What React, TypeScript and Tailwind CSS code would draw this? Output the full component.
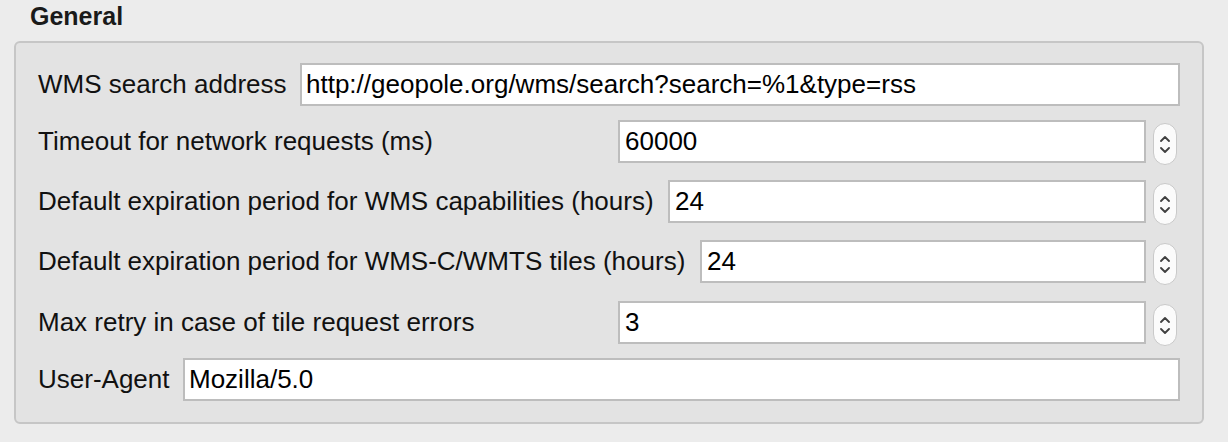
import React from "react";

const font = { fontFamily: '"Liberation Sans", Arial, Helvetica, sans-serif' };

function Spinner() {
  return (
    <div className="ml-[7px] mr-[3px] mt-[3px] flex h-[42px] w-[24px] shrink-0 flex-col items-center justify-center gap-[5px] rounded-full border-[1.5px] border-[#c9c9c9] bg-[#fbfbfb]">
      <svg width="10" height="6" viewBox="0 0 10 6">
        <path d="M1 5 L5 1 L9 5" fill="none" stroke="#3f3f3f" strokeWidth="1.8" strokeLinecap="round" strokeLinejoin="round" />
      </svg>
      <svg width="10" height="6" viewBox="0 0 10 6">
        <path d="M1 1 L5 5 L9 1" fill="none" stroke="#3f3f3f" strokeWidth="1.8" strokeLinecap="round" strokeLinejoin="round" />
      </svg>
    </div>
  );
}

function Field({ value, inset }: { value: string; inset: string }) {
  return (
    <div
      className={`flex h-[43px] min-w-0 flex-1 items-center border-2 border-[#bdbdbd] bg-white text-[26px] text-black whitespace-nowrap ${inset}`}
    >
      {value}
    </div>
  );
}

function Row({
  label,
  labelW,
  value,
  spin,
  mt,
}: {
  label: string;
  labelW: string;
  value: string;
  spin?: boolean;
  mt: string;
}) {
  return (
    <div className={`flex h-[43px] items-start ${mt}`}>
      <div className={`flex h-[43px] shrink-0 items-center whitespace-nowrap text-[26px] text-[#111] ${labelW}`}>
        {label}
      </div>
      <Field value={value} inset={spin ? "pl-[5px]" : "pl-[4px]"} />
      {spin ? <Spinner /> : null}
    </div>
  );
}

export default function App() {
  return (
    <div className="h-[442px] w-[1228px] overflow-hidden bg-[#ececec] pl-[14px]" style={font}>
      <div className="h-[41px] pl-[16px] pt-[1px] text-[25px] font-bold leading-[30px] text-[#1a1a1a]">
        General
      </div>
      <div className="h-[383px] w-[1190px] rounded-[6px] border-2 border-[#c6c6c6] bg-[#e3e3e3] pl-[22px] pr-[22px] pt-[20px]">
        <div className="flex flex-col">
          <Row mt="mt-0" label="WMS search address" labelW="w-[262px]" value="http://geopole.org/wms/search?search=%1&type=rss" />
          <Row mt="mt-[14px]" label="Timeout for network requests (ms)" labelW="w-[580px]" value="60000" spin />
          <Row mt="mt-[17px]" label="Default expiration period for WMS capabilities (hours)" labelW="w-[630px]" value="24" spin />
          <Row mt="mt-[17px]" label="Default expiration period for WMS-C/WMTS tiles (hours)" labelW="w-[662px]" value="24" spin />
          <Row mt="mt-[18px]" label="Max retry in case of tile request errors" labelW="w-[580px]" value="3" spin />
          <Row mt="mt-[14px]" label="User-Agent" labelW="w-[145px]" value="Mozilla/5.0" />
        </div>
      </div>
    </div>
  );
}
